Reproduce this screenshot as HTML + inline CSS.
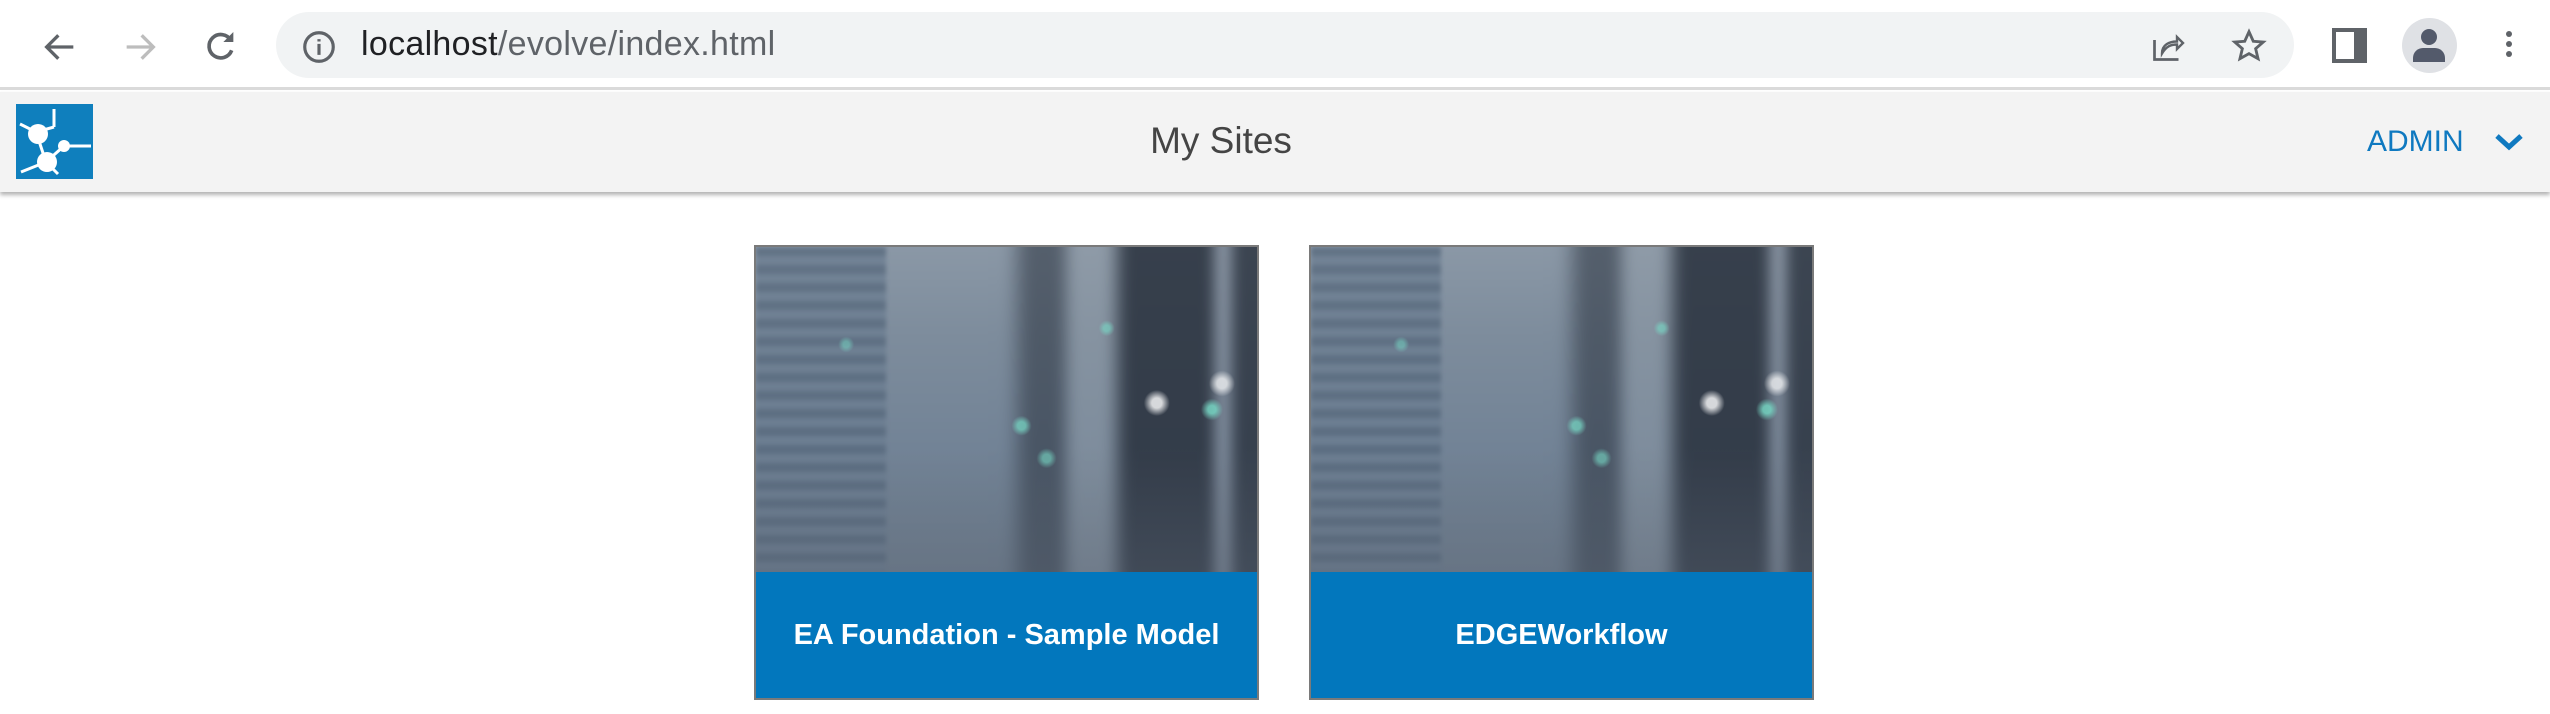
<!DOCTYPE html>
<html><head><style>
*{margin:0;padding:0;box-sizing:border-box}
body{width:2550px;height:714px;background:#fff;font-family:"Liberation Sans",Arial,sans-serif;position:relative;overflow:hidden}
.tb{position:absolute;left:0;top:0;width:2550px;height:90px;background:#fff;border-bottom:3px solid #dadada}
.pill{position:absolute;left:276px;top:12px;width:2018px;height:66px;border-radius:33px;background:#f1f3f4}
.url{position:absolute;left:361px;top:25px;font-size:34px;color:#5f6368;letter-spacing:0.3px}
.url b{font-weight:normal;color:#202124}
.hdr{position:absolute;left:0;top:92px;width:2550px;height:100px;background:#f3f3f3;box-shadow:0 3px 4px rgba(0,0,0,.3)}
.logo{position:absolute;left:16px;top:12px;width:77px;height:75px;background:#0f7fbd}
.title{position:absolute;left:0;width:2442px;top:28px;text-align:center;font-size:37px;color:#444}
.admin{position:absolute;left:2367px;top:33px;font-size:30px;color:#0f79c0}
.card{position:absolute;top:245px;width:505px;height:455px;border:2px solid #7a7a7a;overflow:hidden}
.img{position:absolute;left:0;top:0;width:501px;height:325px;overflow:hidden;background:#718294}
.blur{position:absolute;left:-20px;top:-20px;width:541px;height:365px;filter:blur(7px);
background:
linear-gradient(90deg,rgba(0,0,0,0) 0 50%,rgba(40,48,60,.55) 54% 60%,rgba(150,160,170,.35) 62% 69%,rgba(40,48,60,.85) 72% 88%,rgba(150,160,175,.5) 89% 91%,rgba(40,48,60,.8) 92%),
linear-gradient(180deg,#8d9aa8 0%,#7d8c9c 30%,#728396 60%,#6d7c8c 100%);}
.shelf{position:absolute;left:0;top:0;width:130px;height:325px;background:repeating-linear-gradient(180deg,#56687c 0 9px,#6a7c90 9px 18px);opacity:.75;filter:blur(2px)}
.floor{position:absolute;left:0;top:200px;width:501px;height:125px;background:linear-gradient(180deg,transparent,rgba(90,100,115,.35))}
.dots{position:absolute;left:0;top:0;width:501px;height:325px;background:
radial-gradient(circle at 80% 48%,rgba(255,255,255,.8) 0 5px,transparent 13px),
radial-gradient(circle at 93% 42%,rgba(255,255,255,.7) 0 5px,transparent 13px),
radial-gradient(circle at 91% 50%,rgba(120,220,200,.8) 0 4px,transparent 11px),
radial-gradient(circle at 53% 55%,rgba(120,220,200,.7) 0 4px,transparent 10px),
radial-gradient(circle at 70% 25%,rgba(120,220,200,.6) 0 3px,transparent 8px),
radial-gradient(circle at 58% 65%,rgba(120,220,200,.6) 0 4px,transparent 10px),
radial-gradient(circle at 18% 30%,rgba(120,220,200,.5) 0 3px,transparent 8px)}
.band{position:absolute;left:0;top:325px;width:501px;height:126px;background:#0277bd;color:#fff;font-weight:bold;font-size:29px;text-align:center;line-height:126px}
</style></head><body>
<div class="tb">
<svg style="position:absolute;left:40px;top:27px" width="40" height="40" viewBox="0 0 24 24"><path d="M20 12H5M11 5l-7 7 7 7" stroke="#5f6368" stroke-width="2" fill="none"/></svg>
<svg style="position:absolute;left:120px;top:27px" width="40" height="40" viewBox="0 0 24 24"><path d="M4 12h15M13 5l7 7-7 7" stroke="#bdbdbd" stroke-width="2" fill="none"/></svg>
<svg style="position:absolute;left:200px;top:27px" width="40" height="40" viewBox="0 0 24 24"><path d="M18.5 8A7 7 0 1 0 19 14" stroke="#5f6368" stroke-width="2.2" fill="none"/><path d="M20 3v6h-6z" fill="#5f6368"/></svg>
<div class="pill"></div>
<svg style="position:absolute;left:300px;top:28px" width="38" height="38" viewBox="0 0 24 24"><circle cx="12" cy="12" r="9" stroke="#5f6368" stroke-width="2" fill="none"/><path d="M12 10v7M12 7v1.5" stroke="#5f6368" stroke-width="2"/></svg>
<div class="url"><b>localhost</b>/evolve/index.html</div>
<svg style="position:absolute;left:2150px;top:28px" width="36" height="36" viewBox="0 0 24 24"><path d="M3 8v13h16" stroke="#5f6368" stroke-width="1.8" fill="none"/><path d="M8 17c0-6 5-8 10-8V6l4 4-4 4v-3c-4 0-7 1-10 6z" stroke="#5f6368" stroke-width="1.6" fill="none"/></svg>
<svg style="position:absolute;left:2230px;top:27px" width="38" height="38" viewBox="0 0 24 24"><path d="M12 3l2.7 6 6.3.5-4.8 4.2 1.5 6.3L12 16.8 6.3 20l1.5-6.3L3 9.5 9.3 9z" stroke="#5f6368" stroke-width="1.8" fill="none"/></svg>
<div style="position:absolute;left:2332px;top:28px;width:35px;height:35px;background:#5f6368"><div style="position:absolute;left:4px;top:4px;width:18px;height:27px;background:#fff"></div></div>
<div style="position:absolute;left:2402px;top:18px;width:55px;height:55px;border-radius:50%;background:#dfe1e5;overflow:hidden"><div style="position:absolute;left:19px;top:11px;width:16px;height:16px;border-radius:50%;background:#535a6b"></div><div style="position:absolute;left:11px;top:30px;width:32px;height:14px;border-radius:10px 10px 0 0;background:#535a6b"></div></div>
<div style="position:absolute;left:2506px;top:31px;width:6px;height:6px;border-radius:50%;background:#5f6368;box-shadow:0 10px 0 #5f6368,0 20px 0 #5f6368"></div>
</div>
<div class="hdr">
<div class="logo"><svg width="77" height="75" viewBox="0 0 77 75"><g stroke="#fff" stroke-width="3" fill="#fff"><line x1="20" y1="28" x2="30" y2="58"/><line x1="20" y1="28" x2="38" y2="23"/><line x1="38" y1="23" x2="38" y2="5"/><line x1="20" y1="28" x2="4" y2="20"/><line x1="30" y1="58" x2="42" y2="70"/><line x1="30" y1="58" x2="5" y2="68"/><line x1="30" y1="58" x2="48" y2="42"/><line x1="48" y1="42" x2="75" y2="42"/></g><circle cx="22" cy="30" r="10" fill="#fff"/><circle cx="31" cy="58" r="10" fill="#fff"/><circle cx="48" cy="42" r="6" fill="#fff"/></svg></div>
<div class="title">My Sites</div>
<div class="admin">ADMIN</div>
<svg style="position:absolute;left:2494px;top:38px" width="30" height="24" viewBox="0 0 30 24"><path d="M3 6l12 11 12-11" stroke="#0f79c0" stroke-width="5" fill="none"/></svg>
</div>
<div class="card" style="left:754px"><div class="img"><div class="blur"></div><div class="shelf"></div><div class="floor"></div><div class="dots"></div></div><div class="band">EA Foundation - Sample Model</div></div>
<div class="card" style="left:1309px"><div class="img"><div class="blur"></div><div class="shelf"></div><div class="floor"></div><div class="dots"></div></div><div class="band">EDGEWorkflow</div></div>
</body></html>
